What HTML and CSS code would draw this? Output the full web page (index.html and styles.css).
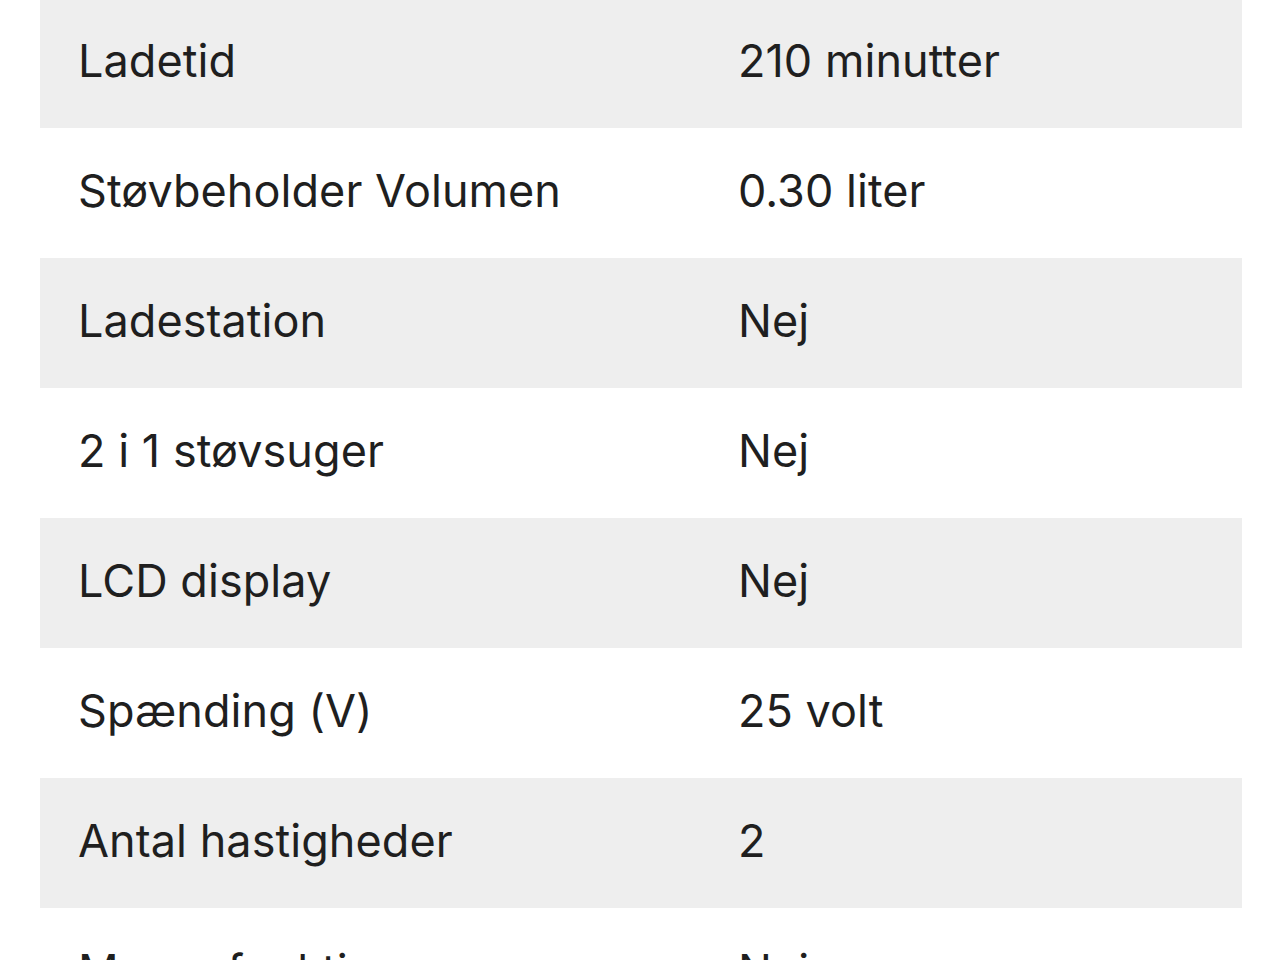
FILE: index.html
```html
<!DOCTYPE html>
<html lang="da">
<head>
<meta charset="utf-8">
<link rel="stylesheet" href="styles.css">
</head>
<body>
<div class="specs">
  <div class="row alt"><div class="label">Ladetid</div><div class="value">210 minutter</div></div>
  <div class="row"><div class="label">Støvbeholder Volumen</div><div class="value">0.30 liter</div></div>
  <div class="row alt"><div class="label">Ladestation</div><div class="value">Nej</div></div>
  <div class="row"><div class="label">2 i 1 støvsuger</div><div class="value">Nej</div></div>
  <div class="row alt"><div class="label">LCD display</div><div class="value">Nej</div></div>
  <div class="row"><div class="label">Spænding (V)</div><div class="value">25 volt</div></div>
  <div class="row alt"><div class="label">Antal hastigheder</div><div class="value">2</div></div>
  <div class="row"><div class="label">Moppefunktion</div><div class="value">Nej</div></div>
</div>
</body>
</html>
```
FILE: styles.css
```css
html, body {
  margin: 0;
  padding: 0;
  background: #ffffff;
  overflow: hidden;
}
body {
  font-family: Inter, "Noto Sans", sans-serif;
  color: #1f1f1f;
}
.specs {
  margin: -2px 38px 0 40px;
  display: flex;
  flex-direction: column;
}
.row {
  height: 130px;
  display: grid;
  grid-template-columns: 660px 1fr;
  align-items: center;
  padding-left: 38px;
  font-size: 45px;
  letter-spacing: 0.05px;
  line-height: 1;
}
.row.alt {
  background: #eeeeee;
}
.label, .value {
  padding-bottom: 6px;
}
```
